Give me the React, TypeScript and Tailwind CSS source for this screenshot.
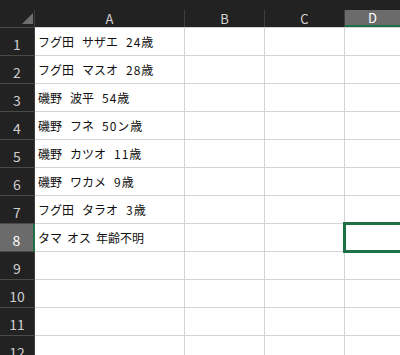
import React from "react";

const rows: string[][] = [
  ["フグ田", "サザエ", "24歳"],
  ["フグ田", "マスオ", "28歳"],
  ["磯野", "波平", "54歳"],
  ["磯野", "フネ", "50ン歳"],
  ["磯野", "カツオ", "11歳"],
  ["磯野", "ワカメ", "9歳"],
  ["フグ田", "タラオ", "3歳"],
  ["タマ", "オス", "年齢不明"],
  [],
  [],
  [],
  [],
];

const font = { fontFamily: '"Noto Sans CJK JP", "Noto Sans", sans-serif' };

export default function App() {
  return (
    <div className="w-[400px] h-[355px] overflow-hidden bg-white" style={font}>
      <div className="h-[10px] bg-[#222222]" />
      <div className="flex h-[17px] bg-[#222222] text-[13px] text-[#d6d6d6] leading-[17px]">
        <div className="w-[35px] shrink-0 border-r border-[#3d3d3d] relative">
          <svg className="absolute left-[22px] top-[3px]" width="11" height="11" viewBox="0 0 11 11">
            <polygon points="11,0 11,11 0,11" fill="#6e6e6e" />
          </svg>
        </div>
        <div className="w-[150px] shrink-0 border-r border-[#3d3d3d] text-center">A</div>
        <div className="w-[80px] shrink-0 border-r border-[#3d3d3d] text-center">B</div>
        <div className="w-[80px] shrink-0 border-r border-[#3d3d3d] text-center">C</div>
        <div className="flex-1 bg-[#6b6b6b] text-center text-white border-b-2 border-[#1e7145] leading-[15px]">D</div>
      </div>
      <div className="flex h-[1px]">
        <div className="w-[35px] shrink-0 bg-[#4a4a4a]" />
        <div className="w-[230px] shrink-0 bg-[#d4d4d4]" />
        <div className="w-[79px] shrink-0 bg-[#d4d4d4]" />
        <div className="flex-1 bg-[#d4d4d4]" />
      </div>
      {rows.map((parts, i) => {
        const sel = i === 7;
        return (
          <div key={i} className="flex h-[28px]">
            <div
              className={
                sel
                  ? "w-[35px] shrink-0 bg-[#6b6b6b] border-b border-[#4a4a4a] border-r-2 border-r-[#1e7145] flex items-center justify-center pt-[5px] text-[14px] text-white"
                  : "w-[35px] shrink-0 bg-[#222222] border-b border-[#4a4a4a] border-r border-r-[#3d3d3d] flex items-center justify-center pt-[5px] text-[14px] text-[#cfcfcf]"
              }
            >
              {i + 1}
            </div>
            <div
              className={
                sel
                  ? "w-[150px] shrink-0 border-r border-b border-[#d4d4d4] flex items-center gap-[5px] pl-[3px] text-[12px] text-[#111] whitespace-nowrap"
                  : "w-[150px] shrink-0 border-r border-b border-[#d4d4d4] flex items-center gap-[8px] pl-[3px] text-[12px] text-[#111] whitespace-nowrap"
              }
            >
              {parts.map((p, j) => (
                <span key={j} className={j === 2 && !sel ? "tracking-[1px]" : ""}>
                  {p}
                </span>
              ))}
            </div>
            <div className="w-[80px] shrink-0 border-r border-b border-[#d4d4d4]" />
            <div className="w-[80px] shrink-0 border-r border-b border-[#d4d4d4]" />
            <div className="flex-1 border-b border-[#d4d4d4] relative">
              {sel && (
                <div className="absolute left-[-2px] top-[-2px] bottom-[-2px] right-[-10px] border-[3px] border-[#1e7145]" />
              )}
            </div>
          </div>
        );
      })}
    </div>
  );
}
